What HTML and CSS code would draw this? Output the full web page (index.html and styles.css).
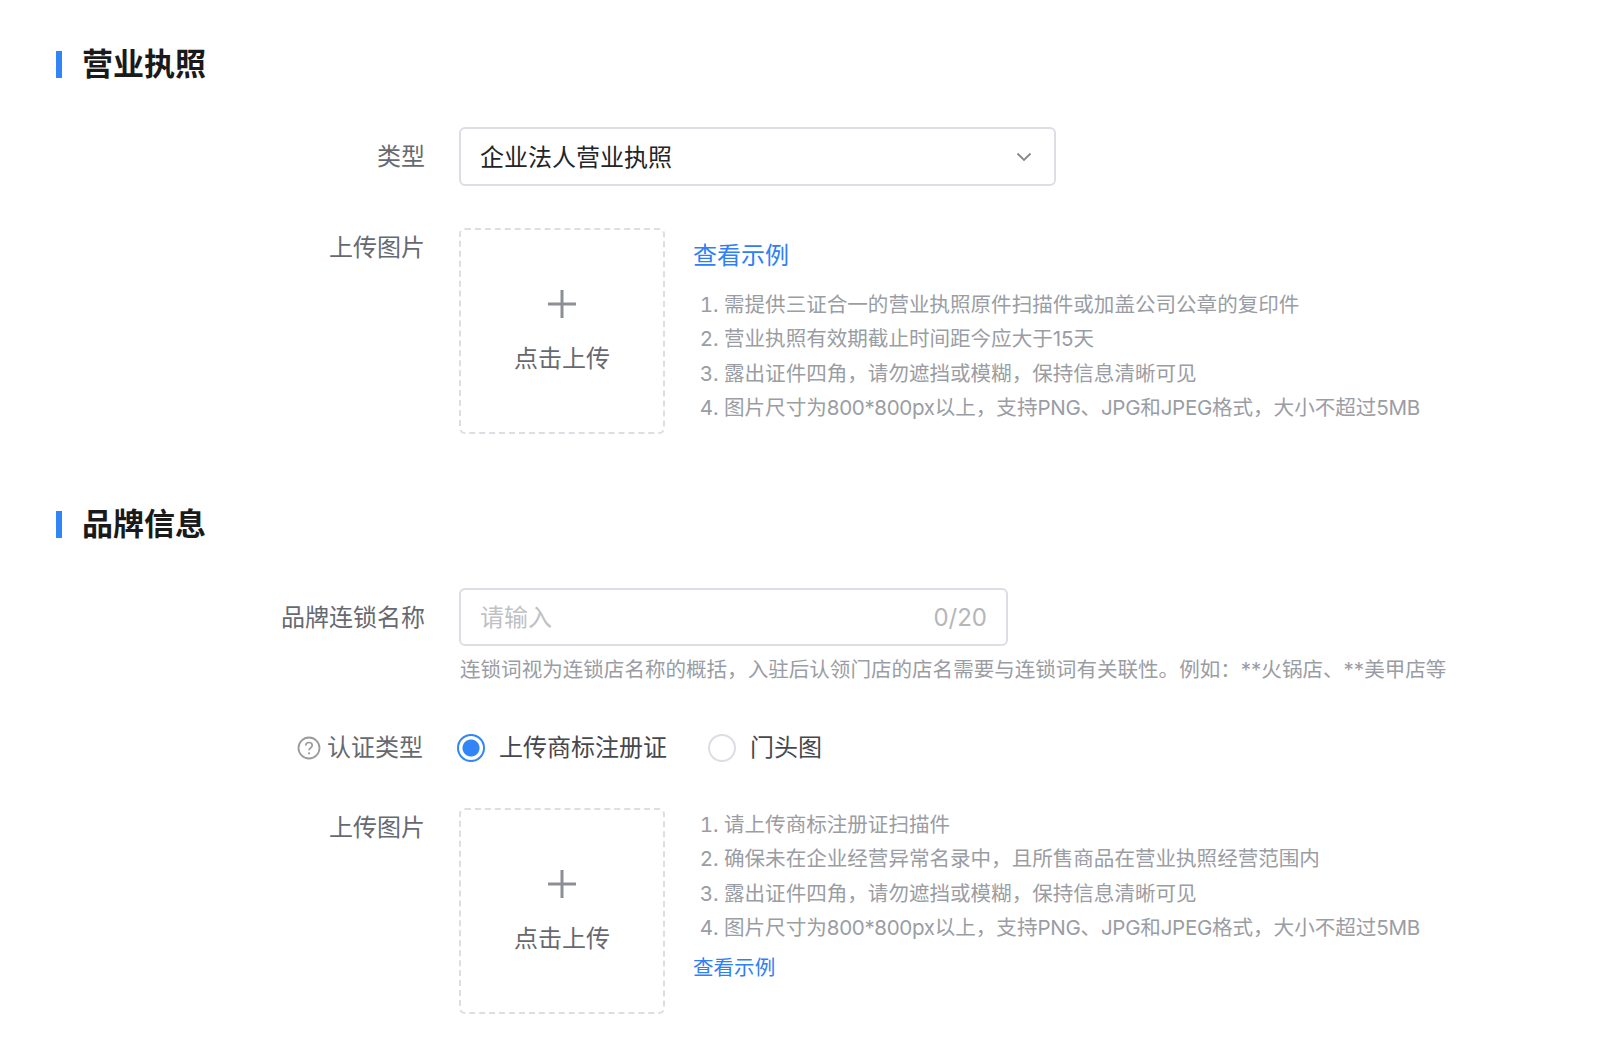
FILE: index.html
```html
<!DOCTYPE html>
<html lang="zh-CN">
<head>
    <meta charset="UTF-8">
    <title>营业执照</title>
    <link rel="stylesheet" href="styles.css">
</head>
<body>
    <main class="page">
        <h2 class="sectionTitle"><span>营业执照</span></h2>

        <div class="row rowSelect">
            <label class="rowLabel">类型</label>
            <div class="selectBox">
                <span>企业法人营业执照</span>
                <svg class="chevron" width="16" height="10" viewBox="0 0 16 10"><path d="M1.5 1.5 8 8l6.5-6.5" fill="none" stroke="#85888e" stroke-width="1.8"/></svg>
            </div>
        </div>

        <div class="row">
            <label class="rowLabel labelUpload">上传图片</label>
            <div class="uploadBox">
                <svg class="plus" width="28" height="28" viewBox="0 0 28 28"><path d="M14 0v28M0 14h28" stroke="#8c8f96" stroke-width="3"/></svg>
                <span>点击上传</span>
            </div>
            <div class="uploadInfo">
                <a class="exampleLink" href="#">查看示例</a>
                <ol class="hints">
                    <li>需提供三证合一的营业执照原件扫描件或加盖公司公章的复印件</li>
                    <li>营业执照有效期截止时间距今应大于15天</li>
                    <li>露出证件四角，请勿遮挡或模糊，保持信息清晰可见</li>
                    <li>图片尺寸为<span class="latin">800*800px</span>以上，支持<span class="latin">PNG</span>、<span class="latin">JPG</span>和<span class="latin">JPEG</span>格式，大小不超过<span class="latin">5MB</span></li>
                </ol>
            </div>
        </div>

        <h2 class="sectionTitle titleBrand"><span>品牌信息</span></h2>

        <div class="row">
            <label class="rowLabel labelInput">品牌连锁名称</label>
            <div class="fieldColumn">
                <div class="inputBox">
                    <input type="text" placeholder="请输入">
                    <span class="counter">0/20</span>
                </div>
                <p class="helper">连锁词视为连锁店名称的概括，入驻后认领门店的店名需要与连锁词有关联性。例如：**火锅店、**美甲店等</p>
            </div>
        </div>

        <div class="row rowRadio">
            <label class="rowLabel labelRadio">
                <svg width="24" height="24" viewBox="0 0 24 24"><circle cx="12" cy="12" r="10.5" fill="none" stroke="#9a9a9a" stroke-width="1.8"/><path d="M8.8 9.5c0-1.9 1.4-3 3.2-3s3.2 1.1 3.2 2.8c0 2.5-3.2 2.6-3.2 5" fill="none" stroke="#9a9a9a" stroke-width="1.7"/><circle cx="12" cy="17.3" r="1.1" fill="#9a9a9a"/></svg>
                认证类型
            </label>
            <div class="radioGroup">
                <div class="radioItem"><span class="radio radioOn"></span><span class="radioText">上传商标注册证</span></div>
                <div class="radioItem"><span class="radio"></span><span class="radioText">门头图</span></div>
            </div>
        </div>

        <div class="row rowLast">
            <label class="rowLabel labelUpload">上传图片</label>
            <div class="uploadBox">
                <svg class="plus" width="28" height="28" viewBox="0 0 28 28"><path d="M14 0v28M0 14h28" stroke="#8c8f96" stroke-width="3"/></svg>
                <span>点击上传</span>
            </div>
            <div class="uploadInfo">
                <ol class="hints">
                    <li>请上传商标注册证扫描件</li>
                    <li>确保未在企业经营异常名录中，且所售商品在营业执照经营范围内</li>
                    <li>露出证件四角，请勿遮挡或模糊，保持信息清晰可见</li>
                    <li>图片尺寸为<span class="latin">800*800px</span>以上，支持<span class="latin">PNG</span>、<span class="latin">JPG</span>和<span class="latin">JPEG</span>格式，大小不超过<span class="latin">5MB</span></li>
                </ol>
                <a class="exampleLink linkSmall" href="#">查看示例</a>
            </div>
        </div>
    </main>
</body>
</html>
```

FILE: styles.css
```css
* {
    box-sizing: border-box;
    padding: 0;
    margin: 0;
    font-family: Inter, "Noto Sans CJK SC", sans-serif;
}

body {
    background-color: #ffffff;
}

.page {
    padding: 44px 0 0 56px;
}

.sectionTitle {
    display: flex;
    align-items: center;
    gap: 20px;
    height: 40px;
    margin-bottom: 43px;
    font-size: 31px;
    font-weight: 700;
    color: #1a1a1a;
}

.sectionTitle span {
    margin-bottom: 6px;
}

.sectionTitle::before {
    content: "";
    width: 6px;
    height: 27px;
    background-color: #3285f6;
}

.titleBrand {
    margin-top: 70px;
    margin-bottom: 44px;
}

.row {
    display: flex;
    align-items: flex-start;
}

.rowSelect {
    margin-bottom: 42px;
}

.rowRadio {
    align-items: center;
    height: 40px;
    margin-top: 43px;
    margin-bottom: 40px;
}

.rowLabel {
    flex: none;
    width: 369px;
    margin-right: 34px;
    text-align: right;
    font-size: 24px;
    line-height: 34px;
    color: #666a70;
}

.rowSelect .rowLabel {
    padding-top: 13px;
}

.labelInput {
    padding-top: 13px;
}

.labelUpload {
    padding-top: 3px;
}

.labelRadio {
    display: flex;
    align-items: center;
    justify-content: flex-end;
    gap: 6px;
    padding-right: 2px;
}

.selectBox {
    display: flex;
    align-items: center;
    justify-content: space-between;
    width: 597px;
    height: 59px;
    padding: 0 22px 2px 19px;
    border: 2px solid #dcdee3;
    border-radius: 6px;
    font-size: 24px;
    color: #222426;
}

.chevron {
    margin-top: 3px;
}

.uploadBox {
    flex: none;
    display: flex;
    flex-direction: column;
    align-items: center;
    width: 206px;
    height: 206px;
    padding-top: 60px;
    border: 2px dashed #dcdee3;
    border-radius: 6px;
    font-size: 24px;
    line-height: 34px;
    color: #666a70;
}

.plus {
    margin-bottom: 24px;
}

.uploadInfo {
    margin-left: 28px;
}

.exampleLink {
    display: block;
    padding-top: 10px;
    margin-bottom: 15px;
    font-size: 24px;
    line-height: 35px;
    color: #2f80f7;
    text-decoration: none;
}

.linkSmall {
    padding-top: 4px;
    margin-bottom: 0;
    font-size: 20.55px;
}

.hints {
    padding-left: 31px;
    font-size: 20.55px;
    line-height: 34.4px;
    color: #9a9da3;
}

.latin {
    letter-spacing: -0.33px;
}

.inputBox {
    display: flex;
    align-items: center;
    width: 549px;
    height: 58px;
    padding: 0 19px;
    border: 2px solid #dcdee3;
    border-radius: 6px;
}

.inputBox input {
    flex: 1;
    min-width: 0;
    border: 0;
    outline: 0;
    font-size: 24px;
}

.inputBox input::placeholder {
    color: #bfc1c4;
}

.counter {
    font-size: 24px;
    color: #b4b6ba;
}

.helper {
    margin-top: 9px;
    margin-left: 1px;
    font-size: 20.55px;
    line-height: 30px;
    white-space: nowrap;
    color: #9a9da3;
}

.radioGroup {
    display: flex;
    align-items: center;
    gap: 41px;
    margin-left: -2px;
}

.radioItem {
    display: flex;
    align-items: center;
    gap: 14px;
    font-size: 24px;
    color: #45484d;
}

.radioText {
    margin-bottom: 5px;
}

.radio {
    width: 28px;
    height: 28px;
    border: 2px solid #dcdee3;
    border-radius: 50%;
}

.radioOn {
    border-color: #3285f6;
    background: radial-gradient(circle, #3285f6 0 8px, #ffffff 9px);
}
```
